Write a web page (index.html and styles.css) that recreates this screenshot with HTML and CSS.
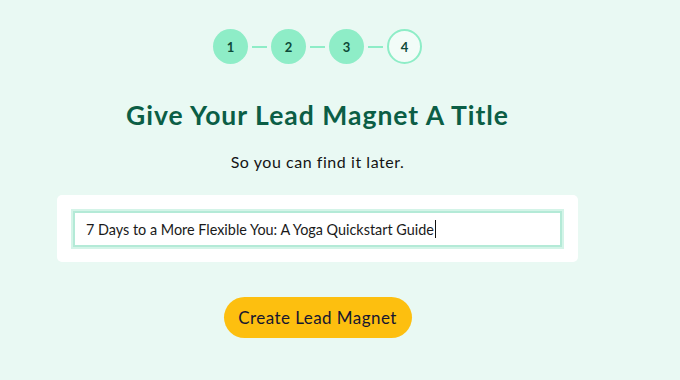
FILE: index.html
```html
<!DOCTYPE html>
<html lang="en">
<head>
<meta charset="utf-8">
<title>Give Your Lead Magnet A Title</title>
<link rel="stylesheet" href="styles.css">
</head>
<body>
<main class="page">
  <ol class="steps">
    <li class="step done">1</li>
    <li class="connector" aria-hidden="true"></li>
    <li class="step done">2</li>
    <li class="connector" aria-hidden="true"></li>
    <li class="step done">3</li>
    <li class="connector" aria-hidden="true"></li>
    <li class="step current">4</li>
  </ol>
  <h1 class="title">Give Your Lead Magnet A Title</h1>
  <p class="subtitle">So you can find it later.</p>
  <div class="card">
    <div class="field" role="textbox" aria-label="Lead magnet title"><span class="value">7 Days to a More Flexible You: A Yoga Quickstart Guide</span><span class="caret"></span></div>
  </div>
  <div class="actions">
    <button class="btn" type="button">Create Lead Magnet</button>
  </div>
</main>
</body>
</html>
```

FILE: styles.css
```css
html, body {
  margin: 0;
  padding: 0;
  background: #e9f9f3;
}
body {
  font-family: "Lato", "Noto Sans", sans-serif;
  color: #141414;
  width: 680px;
  height: 380px;
  overflow: hidden;
}
.page {
  width: 635px;
  padding-top: 29px;
  display: flex;
  flex-direction: column;
  align-items: center;
}
.steps {
  list-style: none;
  margin: 0;
  padding: 0;
  display: flex;
  align-items: center;
}
.step {
  width: 35px;
  height: 35px;
  border-radius: 50%;
  box-sizing: border-box;
  display: flex;
  align-items: center;
  justify-content: center;
  font-size: 13px;
  font-weight: 700;
  color: #0d4a38;
}
.step.done {
  background: #8eedc7;
}
.step.current {
  border: 2.5px solid #8eedc7;
  background: #f2fcf8;
}
.connector {
  width: 15px;
  height: 2px;
  margin: 0 4px;
  background: #8eedc7;
}
.title {
  margin: 35px 0 0;
  font-size: 26.5px;
  line-height: 32px;
  font-weight: 700;
  color: #0b5e45;
  letter-spacing: 1px;
}
.subtitle {
  margin: 21px 0 0;
  font-size: 16px;
  line-height: 20px;
  color: #141414;
  letter-spacing: 0.55px;
}
.card {
  margin-top: 23px;
  width: 521px;
  box-sizing: border-box;
  padding: 16px 16px 15px;
  background: #ffffff;
  border-radius: 5px;
}
.field {
  height: 36px;
  box-sizing: border-box;
  border: 2px solid #b4ead7;
  box-shadow: 0 0 0 2px #d4f4e8;
  padding: 0 11px;
  display: flex;
  align-items: center;
  font-size: 14.4px;
  color: #1a1a1a;
  background: #fff;
}
.caret {
  display: inline-block;
  width: 1px;
  height: 18px;
  background: #111;
  margin-left: 1px;
}
.actions {
  margin-top: 35px;
}
.btn {
  width: 188px;
  height: 41px;
  border: none;
  border-radius: 21px;
  background: #fdbf0f;
  font-family: "Lato", "Noto Sans", sans-serif;
  font-size: 17px;
  letter-spacing: 0.45px;
  color: #161630;
  padding: 0;
  cursor: pointer;
}
```
